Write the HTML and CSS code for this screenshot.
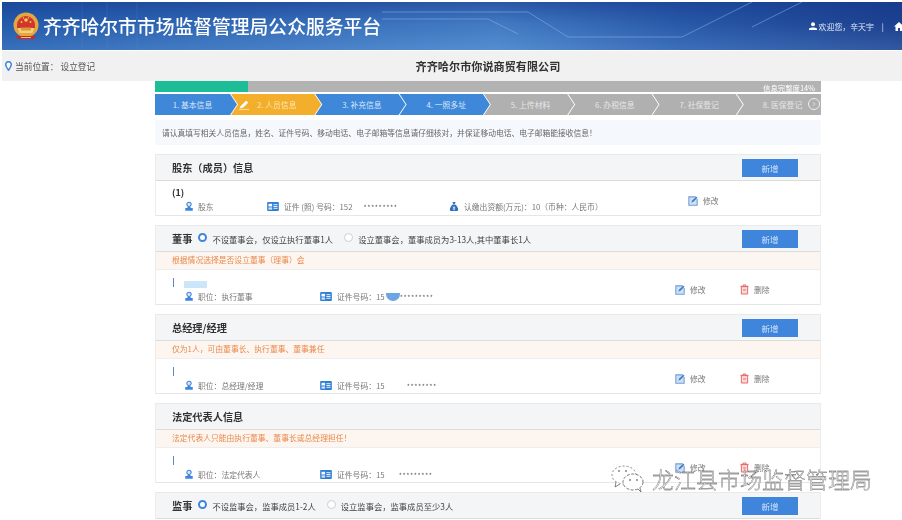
FILE: index.html
```html
<!DOCTYPE html>
<html lang="zh-CN">
<head>
<meta charset="utf-8">
<title>齐齐哈尔市市场监督管理局公众服务平台</title>
<link rel="stylesheet" href="styles.css">
</head>
<body>
<svg class="defs" width="0" height="0" aria-hidden="true">
  <symbol id="i-person" viewBox="0 0 12 12"><circle cx="6" cy="3.4" r="2.6" fill="#dcebfa" stroke="#3f85dc" stroke-width="1.300"/><path d="M4.500 6.200h3l.6 1.600h2.400v3.200h-9V7.800h2.400z" fill="#3f85dc"/></symbol>
  <symbol id="i-card" viewBox="0 0 13 10"><rect width="13" height="10" rx="1" fill="#2f7fd6"/><rect x="1.500" y="2" width="4" height="3" fill="#fff"/><rect x="1.500" y="6" width="4" height="2.500" fill="#cfe3f7"/><path d="M7 3h4.500M7 5h4.500M7 7h4.500" stroke="#fff"/></symbol>
  <symbol id="i-bag" viewBox="0 0 12 12"><path d="M4 .5h4L7 3H5z" fill="#3a78c8"/><path d="M4.500 3.500h3C10 5.500 11 8 11 9.500c0 1.500-1 2-2 2H3c-1 0-2-.5-2-2C1 8 2 5.500 4.500 3.500z" fill="#2f6fbe"/><path d="M4.500 7h3M4.500 9h3M6 6v4.500" stroke="#fff" stroke-width=".8"/></symbol>
  <symbol id="i-edit" viewBox="0 0 12 12"><path d="M9.500 1H1v10h10V3.500" fill="#cfe0f5" stroke="#6f9fdc" stroke-width="1.300"/><path d="M4 8l1-2.500L10 .8l1.300 1.200L6.500 7z" fill="#3f78c4"/></symbol>
  <symbol id="i-trash" viewBox="0 0 10 12"><path d="M.5 2.500h9M3.500 2.500V1h3v1.500" fill="none" stroke="#e0605f" stroke-width="1"/><path d="M1.500 2.800h7V11h-7z" fill="#fbd9d9" stroke="#e0605f"/><path d="M3.500 6.500h3" stroke="#e0605f"/></symbol>
</svg>

<div class="page">
  <header class="banner">
    <svg class="banner-lines" viewBox="0 0 900 48" preserveAspectRatio="none" aria-hidden="true">
      <path d="M80 0v48M105 0v48M135 0v48" stroke="#7fa9dc" stroke-opacity=".14" fill="none"/>
      <path d="M380 10H526L566 35H680L750 0M380 17H486L516 32M750 25L800 0" stroke="#8fb8ea" stroke-opacity=".5" fill="none"/>
    </svg>
    <div class="brand">
      <svg class="emblem" width="26" height="29" viewBox="0 0 26 29" aria-hidden="true">
        <circle cx="13" cy="13" r="12.500" fill="#e3a640"/>
        <path d="M4 13a9 9 0 0 1 18 0v3H4z" fill="#d2352b"/>
        <path d="M5 16h16l-1.500 5h-13z" fill="#f4cf7e"/>
        <path d="M8 15.500h10v3H8z" fill="#d99a35"/>
        <path d="M3 24h20l-2 3H5z" fill="#cc2a22"/>
        <path d="M8 25.500h10" stroke="#f2c45e"/>
        <circle cx="13" cy="8" r="1.800" fill="#f8d25c"/><circle cx="8.500" cy="10" r=".9" fill="#f8d25c"/><circle cx="17.500" cy="10" r=".9" fill="#f8d25c"/><circle cx="10.500" cy="6" r=".7" fill="#f8d25c"/><circle cx="15.500" cy="6" r=".7" fill="#f8d25c"/>
      </svg>
      <h1 class="brand-name">齐齐哈尔市市场监督管理局公众服务平台</h1>
    </div>
    <div class="user">
      <svg width="8" height="8" viewBox="0 0 8 8" aria-hidden="true"><circle cx="4" cy="2.200" r="2" fill="#fff"/><path d="M0 8V6.500l2.500-1h3l2.500 1V8z" fill="#fff"/></svg>
      <span>欢迎您，辛天宇</span>
      <span class="user-sep">|</span>
      <svg width="10" height="9" viewBox="0 0 10 9" aria-hidden="true"><path d="M5 0L0 4.500h1.500V9h2.500V6h2v3h2.500V4.500H10z" fill="#fff"/></svg>
    </div>
  </header>

  <div class="crumb-bar">
    <div class="crumb">
      <svg width="7" height="10" viewBox="0 0 7 10" aria-hidden="true"><path d="M3.500.7a2.800 2.800 0 0 1 2.800 2.800c0 2-2.800 5.700-2.800 5.700S.7 5.500.7 3.500A2.800 2.800 0 0 1 3.500.7z" fill="#fff" stroke="#3f85dc" stroke-width="1.500"/></svg>
      <span>当前位置：</span><span class="crumb-page">设立登记</span>
    </div>
    <div class="company">齐齐哈尔市你说商贸有限公司</div>
  </div>

  <main class="main">
    <div class="progress"><div class="progress-fill"></div><span class="progress-label">信息完整度14%</span></div>

    <ol class="steps">
      <li class="step step-first step-done">1. 基本信息</li>
      <li class="step step-current"><svg class="step-pen" width="11" height="10" viewBox="0 0 11 10" aria-hidden="true"><path d="M1 8l1-2 5-5 2 1.500-5 5zM0 9.500h10" fill="#fff" stroke="#fff" stroke-width=".6"/></svg>2. 人员信息</li>
      <li class="step step-done">3. 补充信息</li>
      <li class="step step-done">4. 一照多址</li>
      <li class="step">5. 上传材料</li>
      <li class="step">6. 办税信息</li>
      <li class="step">7. 社保登记</li>
      <li class="step step-last">8. 医保登记<span class="step-next">›</span></li>
    </ol>

    <p class="notice">请认真填写相关人员信息，姓名、证件号码、移动电话、电子邮箱等信息请仔细核对，并保证移动电话、电子邮箱能接收信息！</p>

    <section class="card">
      <div class="card-head"><h2 class="card-title">股东（成员）信息</h2><button class="add" type="button">新增</button></div>
      <div class="card-body">
        <div class="person person-first">
          <div class="person-name">(1)</div>
          <div class="meta">
            <span class="meta-item meta-role-s"><svg class="ic" width="10" height="11"><use href="#i-person"/></svg>股东</span>
            <span class="meta-item meta-id-s"><svg class="ic ic-card" width="12" height="9"><use href="#i-card"/></svg>证件 (照) 号码：152<span class="mask mask-s">*********</span></span>
            <span class="meta-item"><svg class="ic ic-bag" width="10" height="11"><use href="#i-bag"/></svg>认缴出资额(万元)：10（币种：人民币）</span>
          </div>
        </div>
        <div class="actions actions-one"><span class="act"><svg class="ic" width="10" height="10"><use href="#i-edit"/></svg>修改</span></div>
      </div>
    </section>

    <section class="card">
      <div class="card-head">
        <div class="choice">
          <h2 class="card-title">董事</h2>
          <label class="radio"><span class="dot dot-on"></span>不设董事会，仅设立执行董事1人</label>
          <label class="radio"><span class="dot"></span>设立董事会，董事成员为3-13人,其中董事长1人</label>
        </div>
        <button class="add" type="button">新增</button>
      </div>
      <div class="warn">根据情况选择是否设立董事（理事）会</div>
      <div class="card-body">
        <div class="person">
          <div class="person-name"><span class="tick"></span><span class="blot"></span></div>
          <div class="meta">
            <span class="meta-item meta-role"><svg class="ic" width="10" height="11"><use href="#i-person"/></svg>职位：执行董事</span>
            <span class="meta-item"><svg class="ic ic-card" width="12" height="9"><use href="#i-card"/></svg>证件号码：15<span class="blot-id"></span><span class="mask">*********</span></span>
          </div>
        </div>
        <div class="actions"><span class="act"><svg class="ic" width="10" height="10"><use href="#i-edit"/></svg>修改</span><span class="act"><svg class="ic" width="9" height="11"><use href="#i-trash"/></svg>删除</span></div>
      </div>
    </section>

    <section class="card">
      <div class="card-head"><h2 class="card-title">总经理/经理</h2><button class="add" type="button">新增</button></div>
      <div class="warn">仅为1人，可由董事长、执行董事、董事兼任</div>
      <div class="card-body">
        <div class="person">
          <div class="person-name"><span class="tick"></span></div>
          <div class="meta">
            <span class="meta-item meta-role"><svg class="ic" width="10" height="11"><use href="#i-person"/></svg>职位：总经理/经理</span>
            <span class="meta-item"><svg class="ic ic-card" width="12" height="9"><use href="#i-card"/></svg>证件号码：15<span class="mask mask-g">********</span></span>
          </div>
        </div>
        <div class="actions"><span class="act"><svg class="ic" width="10" height="10"><use href="#i-edit"/></svg>修改</span><span class="act"><svg class="ic" width="9" height="11"><use href="#i-trash"/></svg>删除</span></div>
      </div>
    </section>

    <section class="card">
      <div class="card-head"><h2 class="card-title">法定代表人信息</h2></div>
      <div class="warn">法定代表人只能由执行董事、董事长或总经理担任！</div>
      <div class="card-body">
        <div class="person">
          <div class="person-name"><span class="tick"></span></div>
          <div class="meta">
            <span class="meta-item meta-role"><svg class="ic" width="10" height="11"><use href="#i-person"/></svg>职位：法定代表人</span>
            <span class="meta-item"><svg class="ic ic-card" width="12" height="9"><use href="#i-card"/></svg>证件号码：15<span class="mask">*********</span></span>
          </div>
        </div>
        <div class="actions"><span class="act"><svg class="ic" width="10" height="10"><use href="#i-edit"/></svg>修改</span><span class="act"><svg class="ic" width="9" height="11"><use href="#i-trash"/></svg>删除</span></div>
      </div>
    </section>

    <section class="card">
      <div class="card-head">
        <div class="choice">
          <h2 class="card-title">监事</h2>
          <label class="radio"><span class="dot dot-on"></span>不设监事会，监事成员1-2人</label>
          <label class="radio"><span class="dot"></span>设立监事会，监事成员至少3人</label>
        </div>
        <button class="add" type="button">新增</button>
      </div>
    </section>
  </main>

  <div class="watermark">
    <svg width="36" height="28" viewBox="0 0 36 28" aria-hidden="true">
      <ellipse cx="14" cy="11" rx="12" ry="9" fill="#fff" stroke="#666" stroke-width=".8" stroke-dasharray="2 2"/>
      <path d="M6 18l-1 5 5-3" fill="#fff" stroke="#666" stroke-width=".8"/>
      <ellipse cx="23" cy="18" rx="10" ry="8" fill="#fff" stroke="#555" stroke-width=".8" stroke-dasharray="3 1.500"/>
      <path d="M28 25l3 3-1-4" fill="#fff" stroke="#666" stroke-width=".8"/>
      <circle cx="9" cy="7" r=".9" fill="#777"/><circle cx="16" cy="7" r=".9" fill="#777"/><circle cx="20" cy="16" r=".9" fill="#777"/><circle cx="27" cy="16" r=".9" fill="#777"/>
    </svg>
    <span class="watermark-text">龙江县市场监督管理局</span>
  </div>
</div>
</body>
</html>
```

FILE: styles.css
```css
* { box-sizing: border-box; }
html, body { margin: 0; padding: 0; }
body {
  width: 902px;
  height: 520px;
  overflow: hidden;
  background: #fff;
  font-family: "Noto Sans CJK SC", "Noto Sans", sans-serif;
  color: #333;
}
.defs { position: absolute; }
.page { position: relative; height: 520px; padding-top: 2px; filter: blur(.45px); }

.banner {
  position: relative;
  height: 48px;
  margin-left: 2px;
  display: flex;
  align-items: center;
  justify-content: space-between;
  overflow: hidden;
  background:
    linear-gradient(180deg, rgba(20,55,140,.6) 0%, rgba(20,55,140,.15) 45%, rgba(120,170,225,.22) 100%),
    linear-gradient(90deg, #2660b0 0%, #3a74bf 30%, #4a86cc 55%, #2c5fae 75%, #1e418f 100%);
}
.banner-lines { position: absolute; inset: 0; width: 100%; height: 100%; }
.brand { position: relative; display: flex; align-items: center; gap: 4px; padding-left: 11px; }
.emblem { flex: none; margin-top: 1px; }
.brand-name { margin: 0; font-size: 18.800px; line-height: 24px; font-weight: 500; color: #fff; white-space: nowrap; }
.user { position: relative; display: flex; align-items: center; gap: 2px; font-size: 7.900px; color: #dfe8f5; white-space: nowrap; margin-right: -2px; }
.user-sep { margin: 0 8px 0 6px; }

.crumb-bar {
  height: 30px;
  margin: 1px 0 0 2px;
  display: grid;
  grid-template-columns: 153px 666px;
  align-items: center;
  background: #f1f1f1;
}
.crumb { display: flex; align-items: center; white-space: nowrap; padding-left: 3px; gap: 3px; font-size: 8.700px; color: #555; }
.crumb-page { margin-left: -1px; }
.company { text-align: center; font-size: 11.150px; font-weight: 700; color: #333; }

.main { width: 666px; margin-left: 155px; }

.progress { position: relative; height: 11px; background: #b3b3b3; }
.progress-fill { width: 93px; height: 100%; background: #1dbd97; }
.progress-label { position: absolute; top: 1px; right: 6px; font-size: 7.400px; line-height: 11px; color: #fff; }

.steps { list-style: none; display: flex; margin: 2px 0 0; padding: 0; height: 21px; }
.step {
  position: relative;
  flex: none;
  width: 91.300px;
  margin-right: -7px;
  padding-left: 2px;
  display: flex;
  align-items: center;
  justify-content: center;
  gap: 4px;
  font-size: 7.800px;
  color: #e6e6e6;
  background: #b0b0b0;
  clip-path: polygon(0 0, calc(100% - 8px) 0, calc(100% - 1px) 50%, calc(100% - 8px) 100%, 0 100%, 7px 50%);
}
.step-done { background: #3f88d9; color: #d6e6f8; }
.step-current { background: #f3ae2b; color: #fde6b0; justify-content: flex-start; padding-left: 8px; }
.step-pen { flex: none; margin-right: 3px; }
.step-first { width: 83px; padding-left: 0; padding-right: 8px; clip-path: polygon(0 0, 75px 0, 82px 50%, 75px 100%, 0 100%); }
.step-last { width: 84.200px; margin-right: 0; clip-path: polygon(0 0, 100% 0, 100% 100%, 0 100%, 7px 50%); justify-content: flex-start; padding-left: 26px; }
.step-next {
  position: absolute; right: 1px; top: 4px;
  width: 12px; height: 12px;
  border: 1px solid #eee; border-radius: 50%;
  font-size: 9px; line-height: 9px; text-align: center; color: #eee;
}

.notice {
  height: 25px;
  margin: 5px 0 9px;
  padding: 0 7px;
  background: #f5f9fd;
  font-size: 7.770px;
  line-height: 25px;
  color: #666;
  white-space: nowrap;
}

.card { margin-bottom: 9px; border-right: 1px solid #ececec; border-left: 1px solid #ececec; }
.card-head {
  height: 27px;
  padding: 0 22px 0 16px;
  display: flex;
  align-items: center;
  justify-content: space-between;
  background: #f3f5f7;
  border-top: 1px solid #e9e9e9;
  border-bottom: 1px solid #dcdcdc;
}
.card-title { margin: 0; font-size: 10.200px; font-weight: 700; color: #333; white-space: nowrap; }
.add {
  width: 56px; height: 18px; padding: 0; border: 0;
  font: inherit; font-size: 8.500px; line-height: 18px;
  color: #cfe2f7; background: #3f85dc;
}
.choice { display: flex; align-items: center; }
.radio { display: flex; align-items: center; font-size: 8.300px; color: #444; white-space: nowrap; }
.choice .card-title + .radio { margin-left: 6px; margin-right: 11px; }
.dot { width: 9px; height: 9px; margin-right: 5px; margin-top: -3px; border: 1px solid #cfcfcf; border-radius: 50%; background: #fff; flex: none; }
.dot-on { border: 2.500px solid #3f85dc; }

.warn {
  height: 18px;
  padding-left: 16px;
  border-bottom: 1px solid #eee;
  background: #fdf5ef;
  font-size: 7.800px;
  line-height: 16px;
  color: #e88a4d;
}

.card-body {
  height: 35px;
  display: flex;
  justify-content: space-between;
  align-items: flex-start;
  background: #fff;
  border-bottom: 1px solid #e6e6e6;
}
.person { padding: 6px 0 0 16px; }
.person-first { padding-top: 5px; }
.person-name { position: relative; height: 13px; display: flex; align-items: center; font-size: 9px; color: #333; font-weight: 700; }
.tick { width: 1px; height: 9px; background: #5b88c8; margin-left: 1px; }
.blot { position: absolute; left: 12px; top: 5px; width: 23px; height: 7px; background: #cbe6f8; }
.meta { display: flex; padding-left: 12px; height: 15px; align-items: center; font-size: 7.800px; color: #777; white-space: nowrap; }
.meta-item { position: relative; display: flex; align-items: center; }
.ic { flex: none; margin-right: 4px; }
.ic-card { margin-right: 5px; }
.ic-bag { margin-right: 5px; }
.meta-role-s { width: 83px; }
.meta-id-s { width: 182px; }
.meta-role { width: 136px; }
.mask { margin-left: 14px; letter-spacing: .5px; font-size: 7px; color: #666; }
.mask-s { margin-left: 11px; }
.mask-g { margin-left: 22px; }
.blot-id { width: 14px; height: 8px; margin-left: 1px; margin-right: -14px; background: #6aa5e4; border-radius: 0 0 7px 7px; }
.actions { display: flex; gap: 35px; padding: 14px 50px 0 0; font-size: 7.800px; color: #777; }
.actions-one { padding: 14px 102px 0 0; }
.act { display: flex; align-items: center; gap: 1px; width: 30px; white-space: nowrap; }

.watermark {
  position: absolute;
  left: 610px;
  top: 464px;
  display: flex;
  align-items: center;
  gap: 6px;
}
.watermark-text {
  font-size: 22px;
  line-height: 28px;
  font-weight: 300;
  color: #fff;
  white-space: nowrap;
  -webkit-text-stroke: .35px #444;
}
```
